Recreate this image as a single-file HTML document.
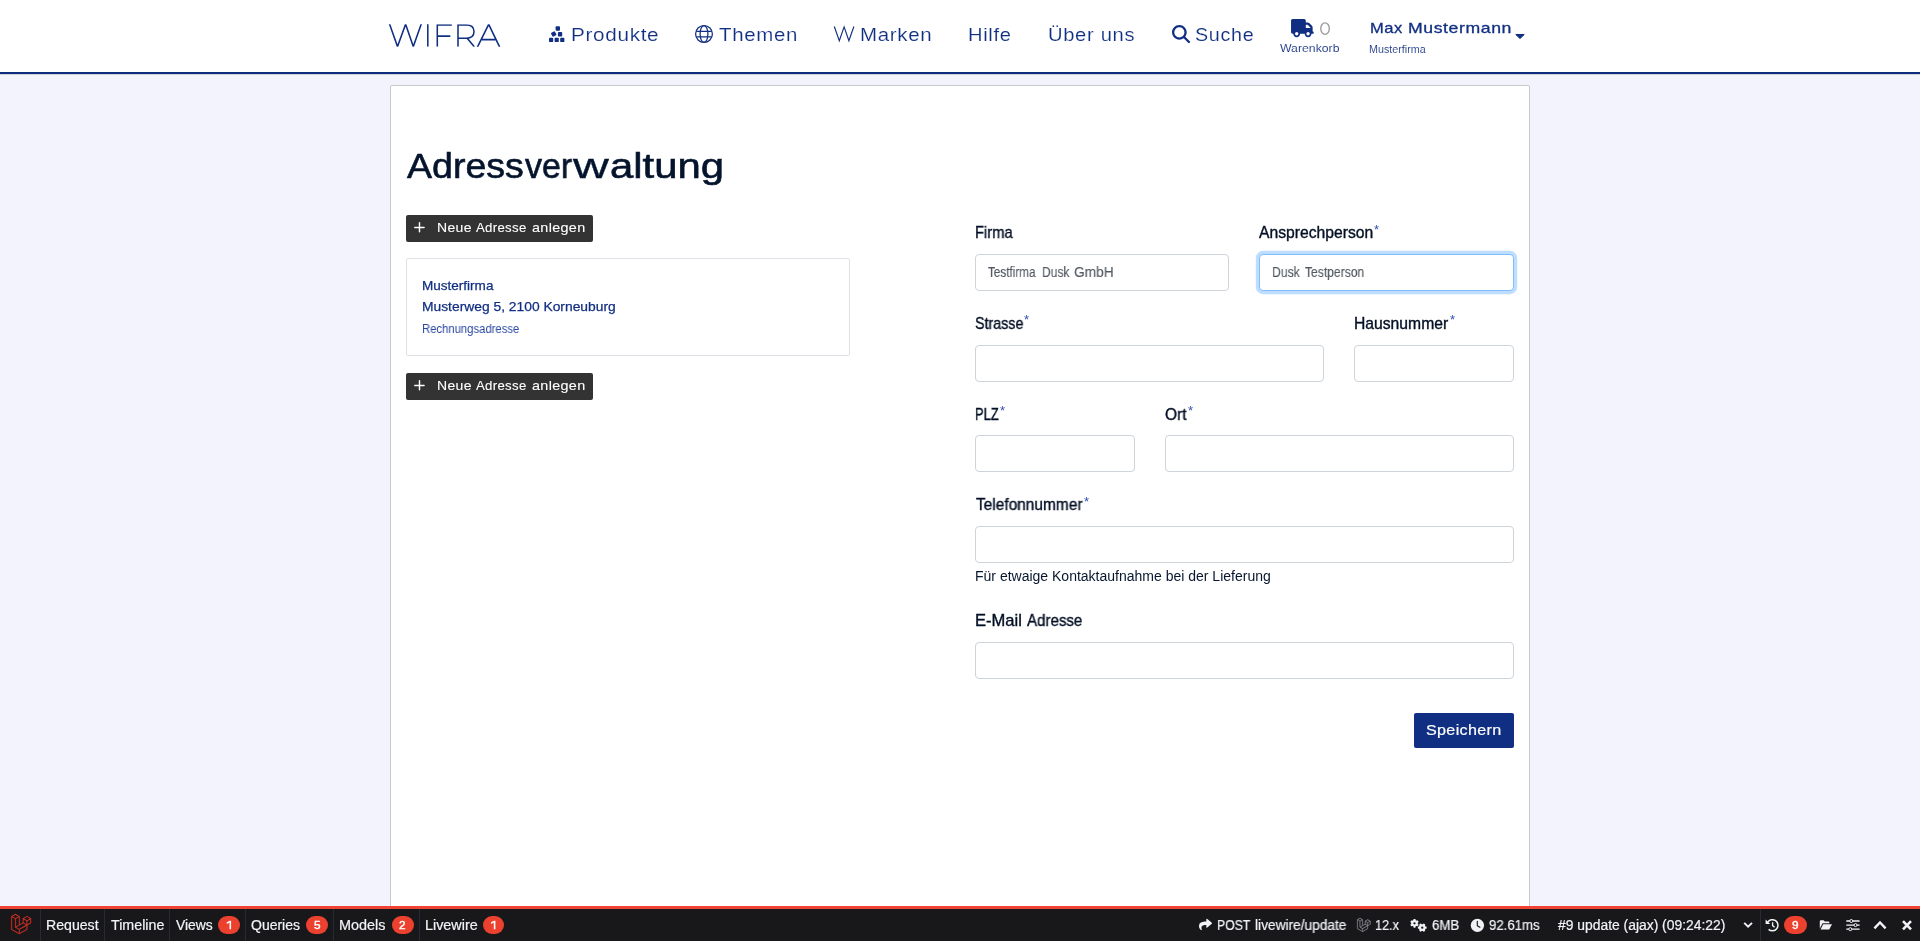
<!DOCTYPE html>
<html lang="de">
<head>
<meta charset="utf-8">
<title>Adressverwaltung</title>
<style>
*{box-sizing:border-box;margin:0;padding:0}
html,body{width:1920px;height:941px;overflow:hidden}
body{background:#f2f3fd;font-family:"Liberation Sans",sans-serif;position:relative}
.t{will-change:transform;position:absolute;white-space:nowrap;line-height:1;transform-origin:0 0;font-family:"Liberation Sans",sans-serif}
.abs{position:absolute}
#hdr{position:absolute;left:0;top:0;width:1920px;height:72px;background:#fff}
#hline{position:absolute;left:0;top:72px;width:1920px;height:2px;background:#0f2d80}
#hshadow{position:absolute;left:0;top:74px;width:1920px;height:1px;background:#d0d0d3}
#card{position:absolute;left:390px;top:85px;width:1140px;height:900px;background:#fff;border:1px solid #c9c9c9;border-radius:2px}
.btn-dark{display:block;border:0;padding:0;margin:0;outline:0;position:absolute;left:406px;width:187px;height:26.5px;background:#333;border-radius:2px}
#addr{position:absolute;left:406px;top:258px;width:444px;height:98px;border:1px solid #dee2e6;border-radius:2px;background:#fff}
.inp{display:block;outline:0;padding:0;margin:0;-webkit-appearance:none;appearance:none;position:absolute;height:37px;background:#fff;border:1px solid #ced4da;border-radius:4px}
.inp.focus{border-color:#80bdff;box-shadow:0 0 0 3.2px rgba(0,123,255,.25)}
#save{display:block;border:0;padding:0;margin:0;outline:0;position:absolute;left:1414px;top:713px;width:100px;height:35px;background:#112f82;border-radius:2px}
#dbg-red{position:absolute;left:0;top:906px;width:1920px;height:3px;background:#ef4433}
#dbg{position:absolute;left:0;top:909px;width:1920px;height:32px;background:#18181b}
.sep{position:absolute;top:909px;width:1px;height:32px;background:#262b3a}
.badge{position:absolute;top:915.7px;height:18.4px;width:22.1px;border-radius:9.2px;background:#ed4130}
svg{position:absolute;overflow:visible}
</style>
</head>
<body>
<header id="hdr"></header><div id="hline"></div><div id="hshadow"></div>
<main id="card"></main>
<!-- logo WIFRA -->
<svg style="left:0;top:0" width="520" height="72" viewBox="0 0 520 72" fill="none" stroke="#112f82" stroke-width="1.55" stroke-linejoin="miter" stroke-linecap="butt">
<defs><clipPath id="lc"><rect x="380" y="24.15" width="130" height="22.6"/></clipPath></defs>
<g clip-path="url(#lc)">
<path d="M389.4 23.6 L397.5 46.6 L405.6 24.2 L413.3 46.6 L421.4 23.6"/>
<path d="M427.8 24.1 V46.8"/>
<path d="M451.8 24.9 H437.3 V46.8 M437.3 36.1 H450.3"/>
<path d="M458 46.8 V24.9 H466.3 C471.6 24.9 474 27.9 474 31.6 C474 35.3 471.6 38.3 466.3 38.3 H458 M467.4 38.4 L474.3 46.8"/>
<path d="M477.4 47.2 L488.7 24.3 L499.7 47.2 M481.9 39.6 H495.4"/>
</g>
</svg>
<!-- cubes-stacked -->
<svg style="left:0;top:0" width="600" height="72" viewBox="0 0 600 72" fill="#112f82">
<rect x="555.6" y="26.3" width="4.4" height="4.4" rx="0.9"/>
<rect x="551.5" y="31.8" width="4.4" height="4.4" rx="0.9" transform="rotate(-30 553.7 34)"/>
<rect x="557.9" y="32.1" width="4.3" height="4.3" rx="0.9"/>
<rect x="549" y="37.8" width="4.2" height="4.3" rx="0.9"/>
<rect x="554.6" y="37.8" width="4.2" height="4.3" rx="0.9"/>
<rect x="560.2" y="37.8" width="4.2" height="4.3" rx="0.9"/>
</svg>
<!-- globe -->
<svg style="left:0;top:0" width="760" height="72" viewBox="0 0 760 72" fill="none" stroke="#112f82" stroke-width="1.25">
<circle cx="704" cy="34" r="8.4"/>
<ellipse cx="704" cy="34" rx="3.9" ry="8.4"/>
<path d="M696.3 31.3 H711.7 M696.3 36.9 H711.7"/>
</svg>
<!-- thin W -->
<svg style="left:0;top:0" width="900" height="72" viewBox="0 0 900 72" fill="none" stroke="#112f82" stroke-width="1.15">
<path d="M834.3 26.5 L839.3 40.8 L844.1 26.9 L848.9 40.8 L853.9 26.5"/>
</svg>
<!-- search (FA6 magnifying-glass) -->
<svg style="left:1171.5px;top:25.1px" width="18.1" height="18.1" viewBox="0 0 512 512" fill="#112f82">
<path d="M416 208c0 45.900-14.900 88.300-40 122.700L502.600 457.400c12.500 12.500 12.500 32.800 0 45.300s-32.800 12.500-45.300 0L330.700 376c-34.400 25.200-76.800 40-122.700 40C93.100 416 0 322.900 0 208S93.100 0 208 0S416 93.100 416 208zM208 352a144 144 0 1 0 0-288 144 144 0 1 0 0 288z"/>
</svg>
<!-- truck (FA6) -->
<svg style="left:1290.7px;top:18.8px" width="22.8" height="18.2" viewBox="0 0 640 512" fill="#112f82">
<path d="M48 0C21.500 0 0 21.500 0 48V368c0 26.500 21.500 48 48 48H64c0 53 43 96 96 96s96-43 96-96H384c0 53 43 96 96 96s96-43 96-96h32c17.700 0 32-14.300 32-32s-14.300-32-32-32V288 256 237.300c0-17-6.700-33.300-18.700-45.300L512 114.700c-12-12-28.300-18.700-45.300-18.700H416V48c0-26.500-21.500-48-48-48H48zM416 160h50.700L544 237.300V256H416V160zM112 416a48 48 0 1 1 96 0 48 48 0 1 1 -96 0zm368-48a48 48 0 1 1 0 96 48 48 0 1 1 0-96z"/>
</svg>
<!-- caret -->
<svg style="left:0;top:0" width="1600" height="72" viewBox="0 0 1600 72" fill="#112f82" stroke="#112f82" stroke-width="1" stroke-linejoin="round">
<path d="M1515.8 34.5 H1524.2 L1520 38.6 Z"/>
</svg>
<!-- cart count 0 -->
<svg style="left:0;top:0" width="1400" height="72" viewBox="0 0 1400 72" fill="none" stroke="#9b9b9b" stroke-width="1.35">
<ellipse cx="1325.05" cy="28.55" rx="4.3" ry="5.75"/>
</svg>

<button class="btn-dark" type="button" style="top:215px"></button>
<button class="btn-dark" type="button" style="top:373px"></button>
<div id="addr"></div>
<!-- plus icons -->
<svg style="left:0;top:0" width="700" height="420" viewBox="0 0 700 420" fill="none" stroke="#fff" stroke-width="1.45" stroke-linecap="round">
<path d="M414.8 227.4 H424.1 M419.5 222.6 V231.8"/>
<path d="M414.8 385.4 H424.1 M419.5 380.6 V389.8"/>
</svg>

<input class="inp" type="text" style="left:975px;top:254px;width:254px">
<input class="inp focus" type="text" style="left:1259px;top:254px;width:255px">
<input class="inp" type="text" style="left:975px;top:345px;width:349px">
<input class="inp" type="text" style="left:1354px;top:345px;width:160px">
<input class="inp" type="text" style="left:975px;top:435px;width:160px">
<input class="inp" type="text" style="left:1165px;top:435px;width:349px">
<input class="inp" type="text" style="left:975px;top:526px;width:539px">
<input class="inp" type="text" style="left:975px;top:642px;width:539px">
<button id="save" type="button"></button>
<div id="dbg-red"></div><footer id="dbg"></footer>
<div class="sep" style="left:40px"></div><div class="sep" style="left:104px"></div><div class="sep" style="left:169px"></div><div class="sep" style="left:245px"></div><div class="sep" style="left:333px"></div><div class="sep" style="left:419px"></div><div class="sep" style="left:1760px"></div>
<div class="badge" style="left:218px"></div><div class="badge" style="left:306px"></div><div class="badge" style="left:391.8px"></div><div class="badge" style="left:482.7px;width:21.3px"></div><div class="badge" style="left:1784px;width:23px"></div>
<!-- laravel logo -->
<svg style="left:10.7px;top:913.9px" width="20.4" height="20" viewBox="0 0 24 24" fill="#ee3325" stroke="#ee3325" stroke-width="0.22" preserveAspectRatio="none">
<path d="M23.642 5.430a.364.364 0 01.014.100v5.149c0 .135-.073.260-.189.326l-4.323 2.490v4.934a.378.378 0 01-.188.326L9.930 23.949a.316.316 0 01-.066.027c-.008.002-.016.008-.024.010a.348.348 0 01-.192 0c-.011-.002-.020-.008-.030-.012-.020-.008-.042-.014-.062-.025L.533 18.755a.376.376 0 01-.189-.326V2.974c0-.033.005-.066.014-.098.003-.012.010-.020.014-.032a.369.369 0 01.023-.058c.004-.013.015-.022.023-.033l.033-.045c.012-.010.025-.018.037-.027.014-.012.027-.024.041-.034H.530L5.043.050a.375.375 0 01.375 0L9.930 2.647h.002c.015.010.027.021.040.033l.038.027c.013.014.020.030.033.045.008.011.020.021.025.033.010.020.017.038.024.058.003.011.010.021.013.032.010.031.014.064.014.098v9.652l3.760-2.164V5.527c0-.033.004-.066.013-.098.003-.010.010-.020.013-.032a.487.487 0 01.024-.059c.007-.012.018-.020.025-.033.012-.015.021-.030.033-.043.012-.012.025-.020.037-.028.014-.010.026-.023.041-.032h.001l4.513-2.598a.375.375 0 01.375 0l4.513 2.598c.016.010.027.021.042.031.012.010.025.018.036.028.013.014.022.030.034.044.008.012.019.021.024.033.011.020.018.040.024.060.006.010.012.021.015.032zm-.740 5.032V6.179l-1.578.908-2.182 1.256v4.283zm-4.510 7.750v-4.287l-2.147 1.225-6.126 3.498v4.325zM1.093 3.624v14.588l8.273 4.761v-4.325l-4.322-2.445-.002-.003H5.040c-.014-.010-.025-.021-.040-.031-.011-.010-.024-.018-.035-.027l-.001-.002c-.013-.012-.021-.025-.031-.040-.010-.011-.021-.022-.028-.036h-.002c-.008-.014-.013-.031-.020-.047-.006-.016-.014-.027-.018-.043a.490.490 0 01-.008-.057c-.002-.014-.006-.027-.006-.041V5.789l-2.180-1.257zM5.230.810L1.470 2.974l3.760 2.164 3.758-2.164zm1.956 13.505l2.182-1.256V3.624l-1.580.910-2.182 1.255v9.435zm11.581-10.950l-3.760 2.163 3.760 2.163 3.759-2.164zm-.376 4.978L16.210 7.087 14.630 6.180v4.283l2.182 1.256 1.580.908zm-8.650 9.654l5.514-3.148 2.756-1.572-3.757-2.163-4.323 2.489-3.941 2.269z"/>
</svg>
<!-- share -->
<svg style="left:1198.6px;top:918.2px" width="13" height="13" viewBox="0 0 512 512" fill="#f1f3f7">
<path d="M503.691 189.836L327.687 37.851C312.281 24.546 288 35.347 288 56.015v80.053C127.371 137.907 0 170.100 0 322.326c0 61.441 39.581 122.309 83.333 154.132 13.653 9.931 33.111-2.533 28.077-18.631C66.066 312.814 132.917 274.316 288 272.085V360c0 20.700 24.300 31.453 39.687 18.164l176.004-152c11.071-9.562 11.086-26.753 0-36.328z"/>
</svg>
<!-- laravel small gray -->
<svg style="left:1356.7px;top:918.3px" width="13.7" height="13.8" viewBox="0 0 24 24" fill="#8f8f98" stroke="#8f8f98" stroke-width="0.5" preserveAspectRatio="none">

<path d="M23.642 5.430a.364.364 0 01.014.100v5.149c0 .135-.073.260-.189.326l-4.323 2.490v4.934a.378.378 0 01-.188.326L9.930 23.949a.316.316 0 01-.066.027c-.008.002-.016.008-.024.010a.348.348 0 01-.192 0c-.011-.002-.020-.008-.030-.012-.020-.008-.042-.014-.062-.025L.533 18.755a.376.376 0 01-.189-.326V2.974c0-.033.005-.066.014-.098.003-.012.010-.020.014-.032a.369.369 0 01.023-.058c.004-.013.015-.022.023-.033l.033-.045c.012-.010.025-.018.037-.027.014-.012.027-.024.041-.034H.530L5.043.050a.375.375 0 01.375 0L9.930 2.647h.002c.015.010.027.021.040.033l.038.027c.013.014.020.030.033.045.008.011.020.021.025.033.010.020.017.038.024.058.003.011.010.021.013.032.010.031.014.064.014.098v9.652l3.760-2.164V5.527c0-.033.004-.066.013-.098.003-.010.010-.020.013-.032a.487.487 0 01.024-.059c.007-.012.018-.020.025-.033.012-.015.021-.030.033-.043.012-.012.025-.020.037-.028.014-.010.026-.023.041-.032h.001l4.513-2.598a.375.375 0 01.375 0l4.513 2.598c.016.010.027.021.042.031.012.010.025.018.036.028.013.014.022.030.034.044.008.012.019.021.024.033.011.020.018.040.024.060.006.010.012.021.015.032zm-.740 5.032V6.179l-1.578.908-2.182 1.256v4.283zm-4.510 7.750v-4.287l-2.147 1.225-6.126 3.498v4.325zM1.093 3.624v14.588l8.273 4.761v-4.325l-4.322-2.445-.002-.003H5.040c-.014-.010-.025-.021-.040-.031-.011-.010-.024-.018-.035-.027l-.001-.002c-.013-.012-.021-.025-.031-.040-.010-.011-.021-.022-.028-.036h-.002c-.008-.014-.013-.031-.020-.047-.006-.016-.014-.027-.018-.043a.490.490 0 01-.008-.057c-.002-.014-.006-.027-.006-.041V5.789l-2.180-1.257zM5.230.810L1.470 2.974l3.760 2.164 3.758-2.164zm1.956 13.505l2.182-1.256V3.624l-1.580.910-2.182 1.255v9.435zm11.581-10.950l-3.760 2.163 3.760 2.163 3.759-2.164zm-.376 4.978L16.210 7.087 14.630 6.180v4.283l2.182 1.256 1.580.908zm-8.650 9.654l5.514-3.148 2.756-1.572-3.757-2.163-4.323 2.489-3.941 2.269z"/>
</svg>
<!-- cogs -->
<svg style="left:0;top:0" width="1500" height="941" viewBox="0 0 1500 941">
<g transform="translate(1414.5 923.35)" fill="#f1f3f7" stroke="none"><circle r="3.3"/><rect x="-1.05" y="-4.35" width="2.1" height="2.3499999999999996" rx="0.4" transform="rotate(0)"/><rect x="-1.05" y="-4.35" width="2.1" height="2.3499999999999996" rx="0.4" transform="rotate(60)"/><rect x="-1.05" y="-4.35" width="2.1" height="2.3499999999999996" rx="0.4" transform="rotate(120)"/><rect x="-1.05" y="-4.35" width="2.1" height="2.3499999999999996" rx="0.4" transform="rotate(180)"/><rect x="-1.05" y="-4.35" width="2.1" height="2.3499999999999996" rx="0.4" transform="rotate(240)"/><rect x="-1.05" y="-4.35" width="2.1" height="2.3499999999999996" rx="0.4" transform="rotate(300)"/><circle r="1.15" fill="#18181b"/></g>
<g transform="translate(1422.25 927.65)" fill="#f1f3f7" stroke="none"><circle r="3.3"/><rect x="-1.05" y="-4.35" width="2.1" height="2.3499999999999996" rx="0.4" transform="rotate(30)"/><rect x="-1.05" y="-4.35" width="2.1" height="2.3499999999999996" rx="0.4" transform="rotate(90)"/><rect x="-1.05" y="-4.35" width="2.1" height="2.3499999999999996" rx="0.4" transform="rotate(150)"/><rect x="-1.05" y="-4.35" width="2.1" height="2.3499999999999996" rx="0.4" transform="rotate(210)"/><rect x="-1.05" y="-4.35" width="2.1" height="2.3499999999999996" rx="0.4" transform="rotate(270)"/><rect x="-1.05" y="-4.35" width="2.1" height="2.3499999999999996" rx="0.4" transform="rotate(330)"/><circle r="1.15" fill="#18181b"/></g>
</svg>
<!-- clock -->
<svg style="left:0;top:0" width="1500" height="941" viewBox="0 0 1500 941">
<circle cx="1477.4" cy="925.35" r="6.65" fill="#eff1f6"/>
<path d="M1477.3 921.3 V925.7 L1479.9 927.3" fill="none" stroke="#18181b" stroke-width="1.15" stroke-linecap="round" stroke-linejoin="round"/>
</svg>
<!-- right icons -->
<svg style="left:0;top:0" width="1920" height="941" viewBox="0 0 1920 941" fill="none" stroke="#f1f3f7" stroke-linecap="butt" stroke-linejoin="miter">
<!-- chevron down -->
<path d="M1744.2 922.8 L1748.1 926.7 L1752 922.8" stroke-width="1.9"/>
<!-- history -->
<path d="M1767.6 922.3 A5.6 5.6 0 1 1 1768.6 929.4" stroke-width="1.5"/>
<path d="M1765.6 919.4 V924 H1770.2 Z" fill="#f1f3f7" stroke="none"/>
<path d="M1772.6 922.2 V925.6 L1774.6 927.2" stroke-width="1.3"/>
<!-- folder open -->
<path d="M1819.8 928.6 V921.2 Q1819.8 920.2 1820.8 920.2 H1823.6 L1824.8 921.4 H1828.4 Q1829.4 921.4 1829.4 922.4 V923.2 H1822.6 L1819.8 928.6 Z" fill="#f1f3f7" stroke="none"/>
<path d="M1820.6 929.6 L1823.2 924.2 H1832 L1829.2 929.6 Z" fill="#f1f3f7" stroke="none"/>
<!-- sliders -->
<path d="M1846.3 921 H1859.6 M1846.3 925.1 H1859.6 M1846.3 929.2 H1859.6" stroke-width="1.3"/>
<circle cx="1851.3" cy="921" r="1.5" fill="#18181b" stroke-width="1"/>
<circle cx="1855.5" cy="925.1" r="1.5" fill="#18181b" stroke-width="1"/>
<circle cx="1850.3" cy="929.2" r="1.5" fill="#18181b" stroke-width="1"/>
<!-- chevron up -->
<path d="M1874.4 928.4 L1880 922.4 L1885.6 928.4" stroke-width="2.3"/>
<!-- times -->
<path d="M1903 921.2 L1911 929.3 M1911 921.2 L1903 929.3" stroke-width="2.6"/>
</svg>
<!-- badge ones -->
<svg style="left:0;top:0" width="600" height="941" viewBox="0 0 600 941" fill="#fff"><path d="M231.10 920.8 H229.75 L226.75 922.35 V923.95 L229.50 922.6 V929.15 H231.10 Z"/><path d="M495.40 920.8 H494.05 L491.05 922.35 V923.95 L493.80 922.6 V929.15 H495.40 Z"/></svg>

<span class="t" style="left:570.65px;top:25.80px;font-size:18px;color:#112f82;transform:scaleX(1.1492);letter-spacing:0.6px;-webkit-text-stroke:0.15px #fff;">Produkte</span>
<span class="t" style="left:718.97px;top:25.80px;font-size:18px;color:#112f82;transform:scaleX(1.1351);letter-spacing:0.6px;-webkit-text-stroke:0.15px #fff;">Themen</span>
<span class="t" style="left:860.01px;top:25.80px;font-size:18px;color:#112f82;transform:scaleX(1.1378);letter-spacing:0.6px;-webkit-text-stroke:0.15px #fff;">Marken</span>
<span class="t" style="left:968.49px;top:25.80px;font-size:18px;color:#112f82;transform:scaleX(1.1181);letter-spacing:0.6px;-webkit-text-stroke:0.15px #fff;">Hilfe</span>
<span class="t" style="left:1048.27px;top:25.80px;font-size:18px;color:#112f82;transform:scaleX(1.1202);letter-spacing:0.6px;-webkit-text-stroke:0.15px #fff;">Über uns</span>
<span class="t" style="left:1195.14px;top:25.80px;font-size:18px;color:#112f82;transform:scaleX(1.0970);letter-spacing:0.6px;-webkit-text-stroke:0.15px #fff;">Suche</span>
<span class="t" style="left:1280.17px;top:42.80px;font-size:11.8px;color:#112f82;transform:scaleX(1.0388);-webkit-text-stroke:0.1px #fff;">Warenkorb</span>
<span class="t" style="left:1369.52px;top:20.00px;font-size:15px;color:#112f82;transform:scaleX(1.1027);letter-spacing:0.5px;-webkit-text-stroke:0.3px #112f82;">Max</span>
<span class="t" style="left:1407.95px;top:20.00px;font-size:15px;color:#112f82;transform:scaleX(1.1765);letter-spacing:0.5px;-webkit-text-stroke:0.3px #112f82;">Mustermann</span>
<span class="t" style="left:1368.56px;top:44.50px;font-size:10px;color:#112f82;transform:scaleX(1.0728);-webkit-text-stroke:0.1px #fff;">Musterfirma</span>
<span class="t" style="left:407.02px;top:148.90px;font-size:34.2px;color:#05142d;transform:scaleX(1.0976);-webkit-text-stroke:0.6px #05142d;">Adress</span>
<span class="t" style="left:524.70px;top:148.90px;font-size:34.2px;color:#05142d;transform:scaleX(0.9952);-webkit-text-stroke:0.6px #05142d;">ver</span>
<span class="t" style="left:572.81px;top:148.90px;font-size:34.2px;color:#05142d;transform:scaleX(1.4521);-webkit-text-stroke:0.3px #05142d;">w</span>
<span class="t" style="left:609.98px;top:148.90px;font-size:34.2px;color:#05142d;transform:scaleX(1.2248);-webkit-text-stroke:0.6px #05142d;">altung</span>
<span class="t" style="left:436.68px;top:221.70px;font-size:12.7px;color:#fff;transform:scaleX(1.1047);letter-spacing:0.3px;-webkit-text-stroke:0.1px #fff;">Neue</span>
<span class="t" style="left:476.40px;top:221.70px;font-size:12.7px;color:#fff;transform:scaleX(1.0399);letter-spacing:0.3px;-webkit-text-stroke:0.1px #fff;">Adresse</span>
<span class="t" style="left:531.63px;top:221.70px;font-size:12.7px;color:#fff;transform:scaleX(1.1321);letter-spacing:0.3px;-webkit-text-stroke:0.1px #fff;">anlegen</span>
<span class="t" style="left:436.68px;top:379.70px;font-size:12.7px;color:#fff;transform:scaleX(1.1047);letter-spacing:0.3px;-webkit-text-stroke:0.1px #fff;">Neue</span>
<span class="t" style="left:476.40px;top:379.70px;font-size:12.7px;color:#fff;transform:scaleX(1.0399);letter-spacing:0.3px;-webkit-text-stroke:0.1px #fff;">Adresse</span>
<span class="t" style="left:531.63px;top:379.70px;font-size:12.7px;color:#fff;transform:scaleX(1.1321);letter-spacing:0.3px;-webkit-text-stroke:0.1px #fff;">anlegen</span>
<span class="t" style="left:422.35px;top:278.70px;font-size:13.4px;color:#112f82;transform:scaleX(1.0102);-webkit-text-stroke:0.25px #112f82;">Musterfirma</span>
<span class="t" style="left:422.34px;top:300.00px;font-size:13.4px;color:#112f82;transform:scaleX(1.0325);-webkit-text-stroke:0.25px #112f82;">Musterweg 5, 2100 Korneuburg</span>
<span class="t" style="left:422.26px;top:323.00px;font-size:12px;color:#2a46a0;transform:scaleX(0.9403);">Rechnungsadresse</span>
<span class="t" style="left:974.68px;top:225.00px;font-size:15.7px;color:#030f24;transform:scaleX(0.9424);-webkit-text-stroke:0.36px #030f24;">Firma</span>
<span class="t" style="left:1259.36px;top:225.00px;font-size:15.7px;color:#030f24;-webkit-text-stroke:0.36px #030f24;">Ansprechperson</span>
<span class="t" style="left:1373.83px;top:222.60px;font-size:13px;color:#3050b8;transform:scaleX(0.9595);">*</span>
<span class="t" style="left:974.81px;top:315.80px;font-size:15.7px;color:#030f24;transform:scaleX(0.9105);-webkit-text-stroke:0.36px #030f24;">Strasse</span>
<span class="t" style="left:1024.13px;top:313.40px;font-size:13px;color:#3050b8;transform:scaleX(0.9595);">*</span>
<span class="t" style="left:1354.12px;top:315.80px;font-size:15.7px;color:#030f24;-webkit-text-stroke:0.36px #030f24;">Hausnummer</span>
<span class="t" style="left:1449.73px;top:313.40px;font-size:13px;color:#3050b8;transform:scaleX(0.9595);">*</span>
<span class="t" style="left:974.81px;top:406.80px;font-size:15.7px;color:#030f24;transform:scaleX(0.8214);-webkit-text-stroke:0.36px #030f24;">PLZ</span>
<span class="t" style="left:999.63px;top:404.40px;font-size:13px;color:#3050b8;transform:scaleX(0.9595);">*</span>
<span class="t" style="left:1164.76px;top:406.80px;font-size:15.7px;color:#030f24;transform:scaleX(0.9849);-webkit-text-stroke:0.36px #030f24;">Ort</span>
<span class="t" style="left:1187.83px;top:404.40px;font-size:13px;color:#3050b8;transform:scaleX(0.9595);">*</span>
<span class="t" style="left:975.67px;top:497.10px;font-size:15.7px;color:#030f24;transform:scaleX(0.9850);-webkit-text-stroke:0.36px #030f24;">Telefonnummer</span>
<span class="t" style="left:1083.63px;top:494.70px;font-size:13px;color:#3050b8;transform:scaleX(0.9595);">*</span>
<span class="t" style="left:974.65px;top:613.00px;font-size:15.7px;color:#030f24;transform:scaleX(1.0559);-webkit-text-stroke:0.36px #030f24;">E-Mail</span>
<span class="t" style="left:1026.56px;top:613.00px;font-size:15.7px;color:#030f24;transform:scaleX(0.9609);-webkit-text-stroke:0.36px #030f24;">Adresse</span>
<span class="t" style="left:988.41px;top:264.00px;font-size:15.2px;color:#535a62;transform:scaleX(0.7710);-webkit-text-stroke:0.15px #535a62;">Testfirma</span>
<span class="t" style="left:1041.57px;top:264.00px;font-size:15.2px;color:#535a62;transform:scaleX(0.7917);-webkit-text-stroke:0.15px #535a62;">Dusk</span>
<span class="t" style="left:1074.00px;top:264.00px;font-size:15.2px;color:#535a62;transform:scaleX(0.9016);-webkit-text-stroke:0.15px #535a62;">GmbH</span>
<span class="t" style="left:1272.46px;top:264.00px;font-size:15.2px;color:#535a62;transform:scaleX(0.8007);-webkit-text-stroke:0.15px #535a62;">Dusk</span>
<span class="t" style="left:1304.81px;top:264.00px;font-size:15.2px;color:#535a62;transform:scaleX(0.7978);-webkit-text-stroke:0.15px #535a62;">Testperson</span>
<span class="t" style="left:974.66px;top:569.20px;font-size:14px;color:#08162e;">Für etwaige Kontaktaufnahme bei der Lieferung</span>
<span class="t" style="left:1426.26px;top:722.20px;font-size:15px;color:#fff;transform:scaleX(1.0742);letter-spacing:0.3px;-webkit-text-stroke:0.2px #fff;">Speichern</span>
<span class="t" style="left:45.71px;top:918.80px;font-size:13.8px;color:#f1f3f7;transform:scaleX(1.0237);-webkit-text-stroke:0.2px #f1f3f7;">Request</span>
<span class="t" style="left:110.70px;top:918.80px;font-size:13.8px;color:#f1f3f7;transform:scaleX(1.0330);-webkit-text-stroke:0.2px #f1f3f7;">Timeline</span>
<span class="t" style="left:175.96px;top:918.80px;font-size:13.8px;color:#f1f3f7;transform:scaleX(1.0073);-webkit-text-stroke:0.2px #f1f3f7;">Views</span>
<span class="t" style="left:250.85px;top:918.80px;font-size:13.8px;color:#f1f3f7;transform:scaleX(1.0138);-webkit-text-stroke:0.2px #f1f3f7;">Queries</span>
<span class="t" style="left:339.30px;top:918.80px;font-size:13.8px;color:#f1f3f7;transform:scaleX(1.0435);-webkit-text-stroke:0.2px #f1f3f7;">Models</span>
<span class="t" style="left:424.89px;top:918.80px;font-size:13.8px;color:#f1f3f7;transform:scaleX(1.0417);-webkit-text-stroke:0.2px #f1f3f7;">Livewire</span>
<span class="t" style="left:1216.86px;top:918.80px;font-size:13.8px;color:#f1f3f7;transform:scaleX(0.8834);-webkit-text-stroke:0.2px #f1f3f7;">POST</span>
<span class="t" style="left:1254.67px;top:918.80px;font-size:13.8px;color:#f1f3f7;transform:scaleX(0.9935);-webkit-text-stroke:0.2px #f1f3f7;">livewire/update</span>
<span class="t" style="left:1374.93px;top:918.80px;font-size:13.8px;color:#f1f3f7;transform:scaleX(0.9169);-webkit-text-stroke:0.2px #f1f3f7;">12.x</span>
<span class="t" style="left:1432.05px;top:918.80px;font-size:13.8px;color:#f1f3f7;transform:scaleX(0.9559);-webkit-text-stroke:0.2px #f1f3f7;">6MB</span>
<span class="t" style="left:1489.18px;top:918.80px;font-size:13.8px;color:#f1f3f7;transform:scaleX(0.9564);-webkit-text-stroke:0.2px #f1f3f7;">92.61ms</span>
<span class="t" style="left:1557.68px;top:918.80px;font-size:13.8px;color:#f1f3f7;transform:scaleX(1.0055);-webkit-text-stroke:0.2px #f1f3f7;">#9 update (ajax) (09:24:22)</span>
<span class="t" style="left:313.65px;top:920.20px;font-size:11.8px;color:#fff;-webkit-text-stroke:0.4px #fff;">5</span>
<span class="t" style="left:399.47px;top:920.20px;font-size:11.8px;color:#fff;-webkit-text-stroke:0.4px #fff;">2</span>
<span class="t" style="left:1792.14px;top:920.20px;font-size:11.8px;color:#fff;-webkit-text-stroke:0.4px #fff;">9</span>
</body>
</html>
